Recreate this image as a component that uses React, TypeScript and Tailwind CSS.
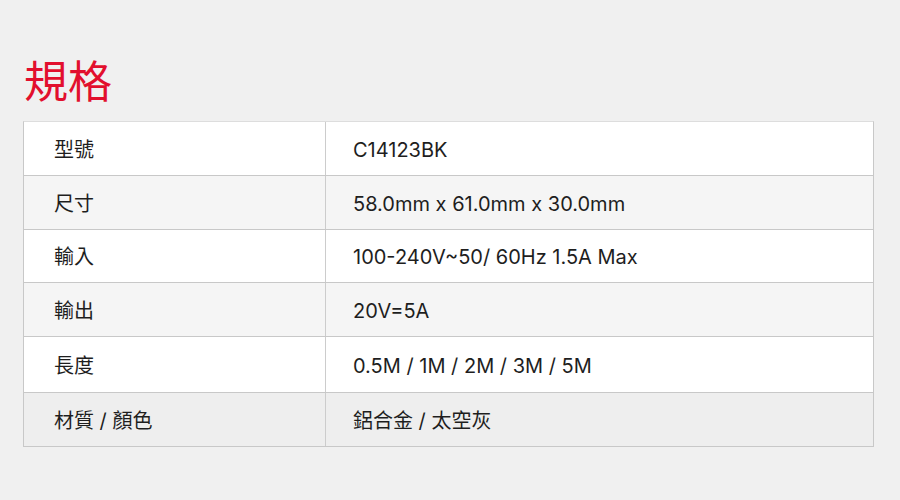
import React from "react";

const rows: { label: string; value: string; bg: string; h: string }[] = [
  { label: "型號", value: "C14123BK", bg: "bg-white", h: "h-[53px]" },
  { label: "尺寸", value: "58.0mm x 61.0mm x 30.0mm", bg: "bg-[#f5f5f5]", h: "h-[54px]" },
  { label: "輸入", value: "100-240V~50/ 60Hz 1.5A Max", bg: "bg-white", h: "h-[53px]" },
  { label: "輸出", value: "20V=5A", bg: "bg-[#f5f5f5]", h: "h-[54px]" },
  { label: "長度", value: "0.5M / 1M / 2M / 3M / 5M", bg: "bg-white", h: "h-[56px]" },
  { label: "材質 / 顏色", value: "鋁合金 / 太空灰", bg: "bg-[#eeeeee]", h: "h-[54px]" },
];

export default function App() {
  return (
    <div
      className="w-[900px] h-[500px] bg-[#f0f0f0] pt-[49px] pl-[23px]"
      style={{ fontFamily: "Inter, 'Noto Sans CJK TC', sans-serif" }}
    >
      <h1
        className="text-[44px] leading-[60px] text-[#e20f2d] pl-[1px] mb-[12px]"
        style={{ fontFamily: "'Noto Sans CJK TC', sans-serif" }}
      >
        規格
      </h1>
      <div className="w-[851px] border border-[#c8c8c8] border-t-[#dddddd]">
        {rows.map((r, i) => (
          <div
            key={i}
            className={`flex ${r.h} ${i > 0 ? "border-t border-[#c8c8c8]" : ""} ${r.bg} text-[20px] text-[#1e1e1e]`}
          >
            <div className="w-[302px] border-r border-[#cccccc] flex items-center pl-[30px] pt-[2px]">
              {r.label}
            </div>
            <div className="flex-1 flex items-center pl-[27px] pt-[2px]">{r.value}</div>
          </div>
        ))}
      </div>
    </div>
  );
}
